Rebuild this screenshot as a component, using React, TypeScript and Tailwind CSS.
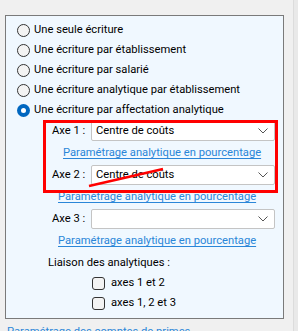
import React from "react";

const font = { fontFamily: 'Roboto, "Segoe UI", sans-serif' };

const Radio = ({ checked = false }: { checked?: boolean }) =>
  checked ? (
    <span className="w-[13px] h-[13px] rounded-full bg-[#0067c0] flex items-center justify-center shrink-0">
      <span className="w-[5px] h-[5px] rounded-full bg-white" />
    </span>
  ) : (
    <span className="w-[13px] h-[13px] rounded-full border border-[#333] bg-[#f3f3f3] shrink-0" />
  );

const Select = ({ value }: { value?: string }) => (
  <div className="ml-auto w-[184px] h-[20px] bg-white border border-[#c4c4c4] rounded-[2px] flex items-center pl-[4px] pr-[6px]">
    <span className="flex-1 leading-none">{value}</span>
    <svg width="10" height="6" viewBox="0 0 10 6" className="shrink-0">
      <path d="M0.5 0.5 L5 5 L9.5 0.5" fill="none" stroke="#555" strokeWidth="1" />
    </svg>
  </div>
);

const Link = ({ className }: { className: string }) => (
  <div className={`h-[24px] flex items-center whitespace-nowrap ${className}`}>
    <span className="text-[#2a86d8] underline underline-offset-2 leading-none">
      Paramétrage analytique en pourcentage
    </span>
  </div>
);

const Check = ({ label }: { label: string }) => (
  <div className="h-[20px] flex items-center pl-[86px] gap-[6px]">
    <span className="w-[13px] h-[13px] rounded-[3px] border border-[#333] bg-[#f3f3f3]" />
    <span>{label}</span>
  </div>
);

const options = [
  "Une seule écriture",
  "Une écriture par établissement",
  "Une écriture par salarié",
  "Une écriture analytique par établissement",
  "Une écriture par affectation analytique",
];

export default function App() {
  return (
    <div className="w-[298px] h-[331px] overflow-hidden bg-[#f0f0f0] flex text-[11.2px] text-black" style={font}>
      <div className="w-[293px] pt-[15px] relative">
        <div className="ml-[5px] w-[279px] h-[304px] border border-[#7a7a7a] bg-[#f0f8ff] pt-[4px]">
          {options.map((o, i) => (
            <div key={o} className="h-[20px] flex items-center pl-[11px] gap-[4px]">
              <Radio checked={i === 4} />
              <span>{o}</span>
            </div>
          ))}
          <div className="pr-[8px] pt-[1px]">
            <div className="h-[20px] flex items-center pl-[46px]">
              <span>Axe 1 :</span>
              <Select value="Centre de coûts" />
            </div>
            <Link className="pl-[57px]" />
            <div className="h-[20px] flex items-center pl-[46px]">
              <span>Axe 2 :</span>
              <Select value="Centre de coûts" />
            </div>
            <Link className="pl-[52px]" />
            <div className="h-[20px] flex items-center pl-[46px]">
              <span>Axe 3 :</span>
              <Select />
            </div>
            <Link className="pl-[52px]" />
          </div>
          <div className="h-[20px] flex items-center pl-[42px]">Liaison des analytiques :</div>
          <Check label="axes 1 et 2" />
          <Check label="axes 1, 2 et 3" />
        </div>
        <div className="pl-[7px] pt-[7px] text-[#2a86d8] underline underline-offset-2 leading-none whitespace-nowrap">
          Paramétrage des comptes de primes
        </div>

        <div className="absolute left-[43px] top-[120px] w-[235px] h-[73px] border-[3px] border-[#ff0000]" />
        <svg className="absolute left-0 top-0" width="293" height="331">
          <line x1="89" y1="186" x2="163" y2="169" stroke="#ff0000" strokeWidth="2.5" />
        </svg>
      </div>
      <div className="flex-1 border-l border-[#dcdcdc] bg-[#e9e9e9]" />
    </div>
  );
}
